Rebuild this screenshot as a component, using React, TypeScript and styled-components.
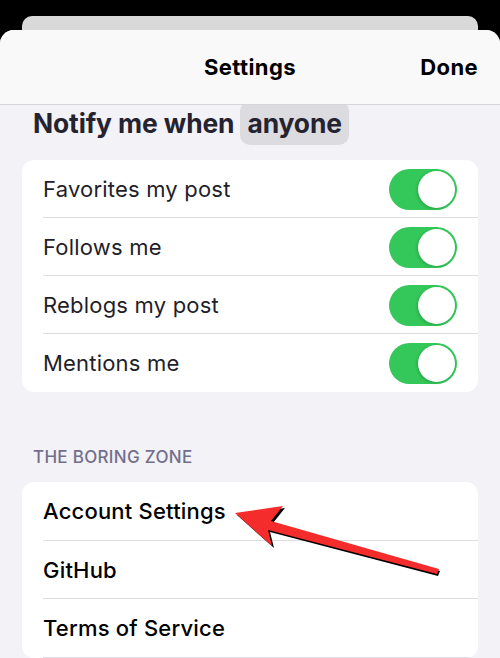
import styled, { createGlobalStyle } from 'styled-components';

const GlobalStyle = createGlobalStyle`
  html, body {
    margin: 0;
    padding: 0;
    background: #000;
  }
  body {
    font-family: Inter, "Noto Sans", "Liberation Sans", sans-serif;
    -webkit-font-smoothing: antialiased;
  }
`;

const Screen = styled.div`
  position: relative;
  width: 500px;
  height: 658px;
  overflow: hidden;
  background: #000;
  padding-top: 16px;
  box-sizing: border-box;
  display: flex;
  flex-direction: column;
`;

const BackCard = styled.div`
  margin: 0 22px;
  height: 14px;
  flex: none;
  background: #d9d9d9;
  border-radius: 10px 10px 0 0;
`;

const Sheet = styled.div`
  flex: 1;
  display: flex;
  flex-direction: column;
  background: #f2f2f7;
  border-radius: 14px 14px 0 0;
  overflow: hidden;
`;

const Header = styled.header`
  position: relative;
  z-index: 1;
  height: 74px;
  flex: none;
  display: flex;
  align-items: center;
  justify-content: center;
  background: #f9f9f9;
  border-bottom: 1px solid #d6d6da;
  font-size: 22px;
  font-weight: 700;
  letter-spacing: 0.4px;
  color: #000;
`;

const DoneButton = styled.span`
  position: absolute;
  right: 22px;
  top: 50%;
  transform: translateY(-50%);
`;

const Body = styled.div`
  padding: 0 22px;
`;

const Heading = styled.h2`
  margin: -4px 0 15px 11px;
  height: 44px;
  display: flex;
  align-items: center;
  font-size: 26.4px;
  font-weight: 700;
  letter-spacing: -0.1px;
  color: #25232f;
`;

const Pill = styled.span`
  margin-left: 6px;
  height: 44px;
  display: flex;
  align-items: center;
  padding: 0 7px;
  border-radius: 10px;
  background: #dcdbe0;
`;

const Card = styled.div`
  background: #fff;
  border-radius: 12px;
  overflow: hidden;
`;

const Row = styled.div<{ $height: number; $dark?: boolean }>`
  position: relative;
  height: ${(p) => p.$height}px;
  display: flex;
  align-items: center;
  justify-content: space-between;
  padding: 0 21px;
  font-size: 22px;
  letter-spacing: 0.2px;
  font-weight: ${(p) => (p.$dark ? 500 : 400)};
  color: ${(p) => (p.$dark ? '#000' : '#1f1e29')};

  &::after {
    content: '';
    position: absolute;
    left: 21px;
    right: 0;
    bottom: 0;
    height: 1px;
    background: #dedee2;
  }

  &:last-child::after {
    display: ${(p) => (p.$dark ? 'block' : 'none')};
  }
`;

const Toggle = styled.span`
  position: relative;
  width: 68px;
  height: 41px;
  border-radius: 21px;
  background: #34c759;
  flex: none;

  &::after {
    content: '';
    position: absolute;
    right: 2px;
    top: 2px;
    width: 37px;
    height: 37px;
    border-radius: 50%;
    background: #fff;
    box-shadow: -1px 1px 3px rgba(0, 0, 0, 0.18);
  }
`;

const SectionTitle = styled.div`
  margin: 55px 0 15px 11px;
  font-size: 17px;
  font-weight: 500;
  letter-spacing: 0.3px;
  color: #726f8c;
`;

const Arrow = styled.svg`
  position: absolute;
  left: 0;
  top: 0;
  pointer-events: none;
`;

const notify = ['Favorites my post', 'Follows me', 'Reblogs my post', 'Mentions me'];
const boring = ['Account Settings', 'GitHub', 'Terms of Service'];

export default function App() {
  return (
    <Screen>
      <GlobalStyle />
      <BackCard />
      <Sheet>
        <Header>
          Settings
          <DoneButton>Done</DoneButton>
        </Header>
        <Body>
          <Heading>
            Notify me when <Pill>anyone</Pill>
          </Heading>
          <Card>
            {notify.map((label) => (
              <Row key={label} $height={58}>
                {label}
                <Toggle />
              </Row>
            ))}
          </Card>
          <SectionTitle>THE BORING ZONE</SectionTitle>
          <Card>
            {boring.map((label) => (
              <Row key={label} $height={58.5} $dark>
                {label}
              </Row>
            ))}
          </Card>
        </Body>
      </Sheet>
      <Arrow width="500" height="658" viewBox="0 0 500 658">
        <polygon
          points="237,515 285,508 273,523 440,571 438,576 270,532 274,548"
          fill="#000"
        />
        <polygon
          points="235,513 283,506 271,521 439,569 437,574 268,530 272,546"
          fill="#f42c2c"
        />
      </Arrow>
    </Screen>
  );
}
